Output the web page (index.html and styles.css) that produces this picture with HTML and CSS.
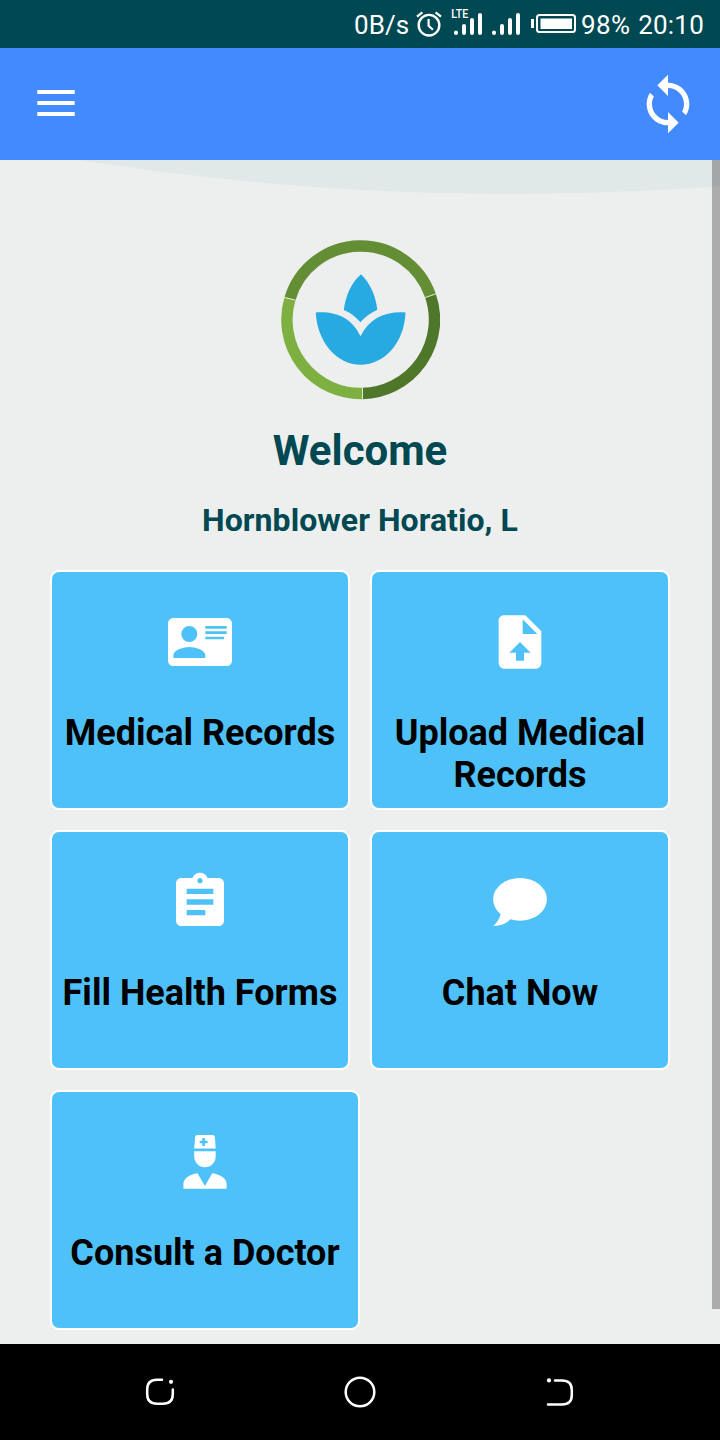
FILE: index.html
```html
<!DOCTYPE html>
<html lang="en">
<head>
<meta charset="utf-8">
<title>Welcome</title>
<link rel="stylesheet" href="styles.css">
</head>
<body>
<div class="screen">
  <div class="status">
    <span class="speed">0B/s</span>
    <svg class="status-icons" width="168" height="48" viewBox="412 0 168 48" fill="none" stroke="#fff">
      <circle cx="429" cy="25.2" r="10.3" stroke-width="2.4"/>
      <path d="M428.6 19v6.8l4.3 4" stroke-width="2.2"/>
      <path d="M417 16.600l5.400-4.200M441 16.600l-5.400-4.200" stroke-width="2.400"/>
      <path d="M456 32.500v.5M464 26v7M472 20v13M480 15v18M494 32.500v.5M502 26v7M510 20v13M518 15v18" stroke-width="4" stroke-linecap="round"/>
      <text class="lte" x="451.300" y="18" textLength="17" lengthAdjust="spacingAndGlyphs">LTE</text>
      <rect x="537" y="15" width="38" height="17" rx="2.500" stroke-width="2"/>
      <path d="M540.500 18.500h31.500v10.500h-31.500z" fill="#fff" stroke="none"/>
      <path d="M532.500 19v9" stroke-width="3"/>
    </svg>
    <span class="battery">98%</span>
    <span class="time">20:10</span>
  </div>
  <header class="bar">
    <svg width="38" height="26" viewBox="0 0 38 26" fill="#fff"><path d="M.3 0h37.400v4H.3zM.3 11h37.400v4H.3zM.3 22h37.400v4H.3z"/></svg>
    <svg width="64" height="64" viewBox="0 0 24 24" fill="#fff"><path d="M12 4V1L8 5l4 4V6c3.310 0 6 2.690 6 6 0 1.010-.25 1.970-.7 2.800l1.460 1.460C19.540 15.030 20 13.570 20 12c0-4.420-3.580-8-8-8zm0 14c-3.310 0-6-2.690-6-6 0-1.010.25-1.970.7-2.800L5.240 7.740C4.460 8.970 4 10.430 4 12c0 4.420 3.580 8 8 8v3l4-4-4-4v3z"/></svg>
  </header>
  <main class="content">
    <svg class="curve" width="720" height="40" viewBox="0 0 720 40"><circle cx="510" cy="-2710" r="2744" fill="#e0e9e8"/></svg>
    <div class="scrollbar"></div>
    <svg class="logo" width="160" height="160" viewBox="280 240 160 160">
      <g fill="none" stroke-width="11.400">
        <path d="M290 298.600A73.800 73.800 0 0 1 430.400 295.500" stroke="#648e33"/>
        <path d="M430.400 295.500A73.800 73.800 0 0 1 362.500 393.500" stroke="#4f772a"/>
        <path d="M362.500 393.500A73.800 73.800 0 0 1 290 298.600" stroke="#7eaf41"/>
      </g>
      <path d="M283.500 297.300l11.500 2.700M425.200 297.600l10.700-3.700M362.500 387.500v12" stroke="#dfe7d8" stroke-width="1" fill="none"/>
      <g fill="#27aae1">
        <path d="M361 274.300c9 8.500 15 22 16.300 35.500-6.500 3-11.500 6.500-16.800 12.500-5-5.500-10-9.800-16.700-12.300 1.600-13.500 7.200-27 17.200-35.700z"/>
        <path d="M315.800 312.500c20.500-1.500 36 5.500 44.700 23.700 9-17.500 24-25 45-23.700-1 30-21 52.300-45 52.300-23.500 0-43.500-23-44.700-52.300z"/>
      </g>
    </svg>
    <h1 class="welcome">Welcome</h1>
    <h2 class="name">Hornblower Horatio, L</h2>
    <div class="tiles">
      <div class="tile">
        <svg class="icon" viewBox="0 0 24 24"><path d="M2,3H22C23.050,3 24,3.950 24,5V19C24,20.050 23.050,21 22,21H2C0.950,21 0,20.050 0,19V5C0,3.950 0.950,3 2,3M14,6V7H22V6H14M14,8V9H22V8H14M14,10V11H21V10H14M8,13.910C6,13.910 2,15 2,17V18H14V17C14,15 10,13.910 8,13.910M8,6A3,3 0 0,0 5,9A3,3 0 0,0 8,12A3,3 0 0,0 11,9A3,3 0 0,0 8,6Z"/></svg>
        <div class="label">Medical Records</div>
      </div>
      <div class="tile">
        <svg class="icon" viewBox="0 0 24 24"><path d="M14,2H6C4.890,2 4,2.890 4,4V20A2,2 0 0,0 6,22H18A2,2 0 0,0 20,20V8L14,2M13.500,16V19H10.500V16H8L12,12L16,16H13.500M13,9V3.500L18.500,9H13Z"/></svg>
        <div class="label wrap">Upload Medical Records</div>
      </div>
      <div class="tile">
        <svg class="icon" viewBox="0 0 24 24"><path d="M19 3h-4.180C14.400 1.840 13.300 1 12 1c-1.300 0-2.400.84-2.820 2H5c-1.100 0-2 .9-2 2v14c0 1.100.9 2 2 2h14c1.100 0 2-.9 2-2V5c0-1.100-.9-2-2-2zm-7 0c.55 0 1 .45 1 1s-.45 1-1 1-1-.45-1-1 .45-1 1-1zm2 14H7v-2h7v2zm3-4H7v-2h10v2zm0-4H7V7h10v2z"/></svg>
        <div class="label">Fill Health Forms</div>
      </div>
      <div class="tile">
        <svg class="icon" viewBox="488 870 64 64"><ellipse cx="520" cy="899.300" rx="26.900" ry="21.400"/><path d="M500.800 912c0 5-3.500 10.500-7.500 13.900 8 0 13-2.500 18-7.400z"/></svg>
        <div class="label">Chat Now</div>
      </div>
      <div class="tile last">
        <svg class="icon" viewBox="173 1130 64 64"><path fill-rule="evenodd" d="M197.500 1135h15q2 0 2.300 1.800l.9 11.700h-21.500l.9-11.700q.4-1.800 2.400-1.800zM202.300 1138v2.700h-2.600v2.600h2.600v2.700h2.600v-2.700h2.700v-2.600h-2.700v-2.700z"/><path d="M194.200 1151.200h21.500v5c0 6.500-4.800 11-10.700 11s-10.800-4.500-10.800-11zM197.500 1173.300l7.400 12.700 7.300-12.700c8.500 1.300 14.400 5.500 14.400 10.500v5h-43.200v-5c0-5 6-9.200 14.100-10.500z"/></svg>
        <div class="label">Consult a Doctor</div>
      </div>
    </div>
  </main>
  <nav class="nav">
    <svg width="32" height="32" viewBox="144 1376 32 32"><path d="M162 1379.700h-5q-9.800 0-9.800 9.800v4.500q0 9.800 9.800 9.800h6q9.800 0 9.800-9.800v-4.500"/><circle class="dot" cx="171" cy="1381.800" r="2.100"/></svg>
    <svg width="32" height="32" viewBox="344 1376 32 32"><circle cx="360" cy="1392" r="14.300"/></svg>
    <svg width="32" height="32" viewBox="544 1376 32 32"><path d="M555 1380.500h7q9.800 0 9.800 9.500v5q0 9.500-9.800 9.500h-14"/><circle class="dot" cx="549" cy="1380.400" r="2.100"/></svg>
  </nav>
</div>
</body>
</html>
```

FILE: styles.css
```css
* { box-sizing: border-box; }
body { margin: 0; font-family: Roboto, sans-serif; }
svg { display: block; flex: none; }
.screen { width: 720px; height: 1440px; display: flex; flex-direction: column; overflow: hidden; background: #edefee; }
.status { height: 48px; flex: none; display: flex; align-items: center; padding: 2px 16px 0 0; justify-content: flex-end; background: #004852; color: #fff; font-size: 26px; line-height: 46px; }
.status-icons { margin: -2px 0 0 3px; }
.battery { margin-left: 1px; }
.time { margin-left: 8px; letter-spacing: .2px; }
.battery { letter-spacing: .3px; }
.lte { font: 500 13px Roboto, sans-serif; fill: #fff; stroke: none; }
.bar { height: 112px; flex: none; display: flex; align-items: center; justify-content: space-between; padding: 0 20px 0 37px; background: #448aff; }
.bar svg:first-child { margin-top: -2px; }
.content { position: relative; flex: 1; padding: 80px 50px 0; display: flex; flex-direction: column; align-items: center; }
.curve { position: absolute; top: 0; left: 0; }
.scrollbar { position: absolute; top: 0; right: 0; width: 8px; height: 1149px; background: rgba(0, 0, 0, .28); }
.welcome, .name { margin: 0; color: #004852; font-weight: 700; white-space: nowrap; }
.welcome { margin-top: 26px; font-size: 42px; line-height: 50px; }
.name { margin-top: 24px; font-size: 32px; line-height: 40px; letter-spacing: .05px; }
.tiles { width: 620px; margin-top: 30px; display: grid; grid-template-columns: 300px 300px; grid-auto-rows: 240px; gap: 20px; }
.tile { background: #4fc1f9; border: 2px solid #fff; border-radius: 9px; display: flex; flex-direction: column; align-items: center; padding-top: 38px; }
.last { width: 310px; }
.icon { width: 64px; height: 64px; fill: #fff; }
.label { margin-top: 38px; font-size: 36px; line-height: 42px; font-weight: 700; text-align: center; white-space: nowrap; color: #000; }
.wrap { padding: 0 10px; white-space: normal; }
.nav { height: 96px; flex: none; background: #000; display: flex; justify-content: center; gap: 168px; align-items: center; }
.nav svg { fill: none; stroke: #fff; stroke-width: 2.500px; stroke-linecap: round; }
.nav .dot { fill: #fff; stroke: none; }
```
